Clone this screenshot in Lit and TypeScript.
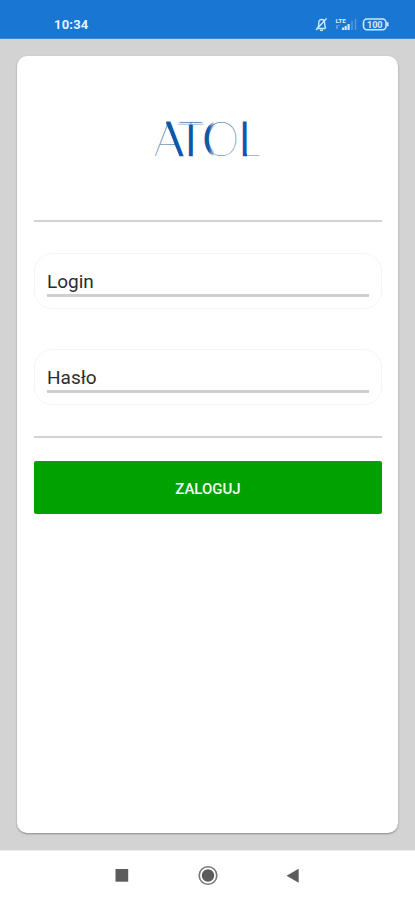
import { LitElement, html, css } from "lit";
import { customElement, property } from "lit/decorators.js";

@customElement("status-bar")
class StatusBar extends LitElement {
  static styles = css`
    :host {
      display: flex;
      justify-content: space-between;
      box-sizing: border-box;
      height: 39px;
      padding: 15px 25px 0 54px;
      background: #1976d2;
      color: #e4f3ff;
      border-bottom: 1px solid #3c86cd;
    }
    .time { font: 700 13px/20px Roboto, sans-serif; letter-spacing: 0.2px; }
    .icons { display: block; }
    text { font-family: Roboto, sans-serif; font-weight: 700; fill: #d8ecff; }
  `;
  render() {
    return html`
      <span class="time">10:34</span>
      <svg class="icons" width="76" height="20" viewBox="314 15 76 20" fill="none" stroke="#cfe8ff">
        <path d="M316.500 28.500h9M317.500 28c1.300-1 1.200-2.500 1.200-4.500 0-2.500 1.200-4 3-4s3 1.500 3 4c0 2 0 3.500 1.200 4.500M326.500 18.500l-10.500 11.500" stroke-width="1.400" />
        <path d="M320 30.300h3" stroke-width="1.500" />
        <text x="335.500" y="22.500" font-size="6.200" textLength="10.500" lengthAdjust="spacingAndGlyphs" stroke="none">LTE</text>
        <path d="M337 25v4M339 25v1" stroke-width="1" opacity=".65" />
        <path d="M343 30v-2.500M345.700 30v-4M348.600 30v-6" stroke-width="2.200" />
        <path d="M352 30v-9M355.500 30v-11" stroke-width="1.500" opacity=".33" />
        <rect x="363.500" y="19" width="22.500" height="10.700" rx="3.500" stroke-width="1.600" />
        <path d="M387.700 22.300v4" stroke-width="1.800" />
        <text x="367" y="27.700" font-size="9" textLength="15.500" lengthAdjust="spacingAndGlyphs" stroke="none">100</text>
      </svg>
    `;
  }
}

@customElement("brand-logo")
class BrandLogo extends LitElement {
  static styles = css`
    :host { display: block; width: 110px; height: 60px; }
    svg { display: block; }
    text { font: 100 47px Lato, sans-serif; stroke-width: 3.8px; }
    .a { fill: url(#fa); stroke: url(#sa); }
    .t { fill: #1256a6; stroke: url(#st); }
    .o { fill: url(#fo); stroke: url(#so); }
    .l { fill: url(#fl); stroke: url(#sl); }
  `;
  render() {
    return html`
      <svg width="110" height="60" viewBox="152 106 110 60">
        <defs>
          <clipPath id="band"><rect x="152" y="121.500" width="110" height="34.800" /></clipPath>
          <linearGradient id="fa" gradientUnits="userSpaceOnUse" x1="165" y1="0" x2="171" y2="0">
            <stop offset="0" stop-color="#40709f" /><stop offset="1" stop-color="#1256a6" />
          </linearGradient>
          <linearGradient id="sa" gradientUnits="userSpaceOnUse" x1="168.300" y1="130.200" x2="169.300" y2="129.800">
            <stop offset="0" stop-color="#1256a6" stop-opacity="0" /><stop offset="1" stop-color="#1256a6" />
          </linearGradient>
          <linearGradient id="st" gradientUnits="userSpaceOnUse" x1="0" y1="124" x2="0" y2="125">
            <stop offset="0" stop-color="#1256a6" stop-opacity=".1" /><stop offset="1" stop-color="#1256a6" />
          </linearGradient>
          <linearGradient id="fo" gradientUnits="userSpaceOnUse" x1="205" y1="0" x2="237" y2="0">
            <stop offset=".2" stop-color="#1256a6" /><stop offset=".6" stop-color="#40709f" />
          </linearGradient>
          <linearGradient id="so" gradientUnits="userSpaceOnUse" x1="205" y1="0" x2="237" y2="0">
            <stop offset=".12" stop-color="#1256a6" /><stop offset=".3" stop-color="#1256a6" stop-opacity="0" />
          </linearGradient>
          <linearGradient id="fl" gradientUnits="userSpaceOnUse" x1="246" y1="0" x2="249" y2="0">
            <stop offset="0" stop-color="#1256a6" /><stop offset="1" stop-color="#5b7f9f" />
          </linearGradient>
          <linearGradient id="sl" gradientUnits="userSpaceOnUse" x1="247" y1="0" x2="247.500" y2="0">
            <stop offset="0" stop-color="#1256a6" /><stop offset="1" stop-color="#1256a6" stop-opacity="0" />
          </linearGradient>
        </defs>
        <text y="155.500" clip-path="url(#band)"><tspan class="a" x="154" textLength="28.500" lengthAdjust="spacingAndGlyphs">A</tspan><tspan class="t" x="179" textLength="23.500" lengthAdjust="spacingAndGlyphs">T</tspan><tspan class="o" x="203.300" textLength="36" lengthAdjust="spacingAndGlyphs">O</tspan><tspan class="l" x="239.700" textLength="20" lengthAdjust="spacingAndGlyphs">L</tspan></text>
      </svg>
    `;
  }
}

@customElement("form-field")
class FormField extends LitElement {
  @property() label = "";
  static styles = css`
    :host {
      display: block;
      box-sizing: border-box;
      height: 56px;
      padding: 17px 12px 0;
      border: 1px solid #f4f4f4;
      border-radius: 18px;
    }
    .entry {
      height: 23px;
      border-bottom: 3px solid #cfcfcf;
      font: 400 19px/22px Roboto, sans-serif;
      color: #2c2c2c;
    }
  `;
  render() {
    return html`<div class="entry">${this.label}</div>`;
  }
}

@customElement("nav-bar")
class NavBar extends LitElement {
  static styles = css`
    :host {
      display: flex;
      justify-content: center;
      box-sizing: border-box;
      height: 50px;
      border-top: 1px solid #ececec;
      background: #fff;
    }
  `;
  render() {
    return html`
      <svg width="415" height="49" viewBox="0 851 415 49" fill="#5c5c5c">
        <rect x="115.500" y="869" width="12.700" height="12.700" />
        <circle cx="208" cy="875.500" r="8.800" fill="none" stroke="#777" stroke-width="1.600" />
        <circle cx="208" cy="875.500" r="6.200" />
        <path d="M286.500 875.700l12.200-7v14z" />
      </svg>
    `;
  }
}

@customElement("app-root")
class AppRoot extends LitElement {
  static styles = css`
    :host { display: flex; flex-direction: column; height: 900px; background: #d3d3d3; }
    .page { flex: 1; display: flex; padding: 17px; }
    .card {
      flex: 1;
      display: flex;
      flex-direction: column;
      padding: 50px 16px 0 17px;
      background: #fff;
      border-radius: 10px;
      box-shadow: 0 1px 2px rgba(0, 0, 0, 0.35);
    }
    .logo { align-self: center; margin-left: -2px; }
    .rule { height: 2px; background: #d2d2d2; }
    .first { margin: 54px 0 31px; }
    .gap { margin-top: 40px; }
    .second { margin: 31px 0 23px; }
    .submit {
      height: 53px;
      border: 0;
      border-radius: 2px;
      padding: 2px 0 0;
      background: #00a100;
      color: #f4fff4;
      font: 500 15px Roboto, sans-serif;
    }
  `;
  render() {
    return html`
      <status-bar></status-bar>
      <main class="page">
        <section class="card">
          <brand-logo class="logo"></brand-logo>
          <div class="rule first"></div>
          <form-field label="Login"></form-field>
          <form-field class="gap" label="Hasło"></form-field>
          <div class="rule second"></div>
          <button class="submit">ZALOGUJ</button>
        </section>
      </main>
      <nav-bar></nav-bar>
    `;
  }
}
